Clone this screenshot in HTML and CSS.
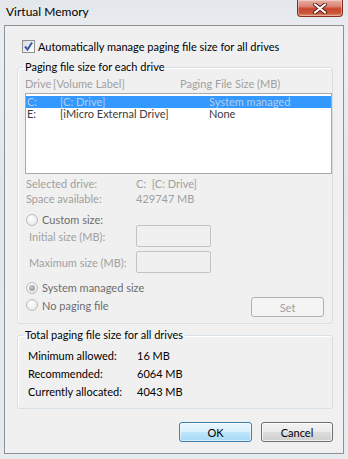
FILE: index.html
```html
<!DOCTYPE html>
<html>
<head>
<meta charset="utf-8">
<title>Virtual Memory</title>
<link rel="stylesheet" href="styles.css">
</head>
<body>
<div class="window">
  <div class="titlebar">
    <span class="title">Virtual Memory</span>
    <div class="close">
      <svg width="16" height="11" viewBox="0 0 16 11">
        <path d="M3 1.5 L13 9.5 M13 1.5 L3 9.5" stroke="#5a1a10" stroke-width="4" stroke-linecap="round"/>
        <path d="M3 1.5 L13 9.5 M13 1.5 L3 9.5" stroke="#ffffff" stroke-width="2.2" stroke-linecap="round"/>
      </svg>
    </div>
  </div>
  <div class="panel">
    <div class="check-row">
      <span class="checkbox">
        <svg width="11" height="11" viewBox="0 0 11 11"><path d="M2 5.5 L4.5 8.5 L9 1.5" fill="none" stroke="#3b5bab" stroke-width="2"/></svg>
      </span>
      <span>Automatically manage paging file size for all drives</span>
    </div>

    <fieldset class="group group-drives">
      <legend>Paging file size for each drive</legend>
      <div class="list-head">
        <span class="hc1">Drive</span><span class="hc2">[Volume Label]</span><span class="hc3">Paging File Size (MB)</span>
      </div>
      <div class="listbox">
        <div class="row selected"><span>C:</span><span>[C: Drive]</span><span>System managed</span></div>
        <div class="row"><span>E:</span><span>[iMicro External Drive]</span><span>None</span></div>
      </div>
      <div class="info info-first"><span class="info-label">Selected drive:</span><span>C:&nbsp; [C: Drive]</span></div>
      <div class="info"><span class="info-label">Space available:</span><span>429747 MB</span></div>

      <div class="radio-row radio-custom"><span class="radio"></span><span class="radio-label">Custom size:</span></div>
      <div class="field-row field-initial"><span class="field-label">Initial size (MB):</span><span class="input"></span></div>
      <div class="field-row field-max"><span class="field-label">Maximum size (MB):</span><span class="input"></span></div>

      <div class="radio-row radio-system"><span class="radio checked"></span><span class="radio-label">System managed size</span></div>
      <div class="last-row">
        <div class="radio-row radio-none"><span class="radio"></span><span class="radio-label">No paging file</span></div>
        <div class="btn btn-disabled">Set</div>
      </div>
    </fieldset>

    <fieldset class="group group-total">
      <legend>Total paging file size for all drives</legend>
      <div class="total-row"><span class="total-label">Minimum allowed:</span><span>16 MB</span></div>
      <div class="total-row"><span class="total-label">Recommended:</span><span>6064 MB</span></div>
      <div class="total-row"><span class="total-label">Currently allocated:</span><span>4043 MB</span></div>
    </fieldset>

    <div class="buttons">
      <div class="btn btn-default">OK</div>
      <div class="btn btn-normal">Cancel</div>
    </div>
  </div>
</div>
</body>
</html>
```

FILE: styles.css
```css
* { box-sizing: border-box; }
html, body { margin: 0; padding: 0; }
body {
  width: 348px;
  height: 459px;
  overflow: hidden;
  font-family: "Lato", "Noto Sans", sans-serif;
  font-size: 11px;
  color: #000;
}
.window {
  width: 348px;
  height: 459px;
  padding: 0 4px 5px 4px;
  background: linear-gradient(180deg, #e3e7eb 0%, #eceff2 10%, #e2e6ea 40%, #e8ebee 100%);
  display: flex;
  flex-direction: column;
}
.titlebar {
  height: 25px;
  display: flex;
  justify-content: space-between;
  align-items: flex-start;
}
.title {
  margin-left: 2px;
  line-height: 24px;
  font-size: 12px;
  color: #000;
}
.close {
  width: 46px;
  height: 17px;
  margin-right: 1px;
  border: 1px solid #8a2d1f;
  border-top: none;
  border-radius: 0 0 4px 4px;
  background: linear-gradient(180deg, #e8b0a4 0%, #d98372 40%, #c7462f 55%, #c9553a 80%, #dc8b68 100%);
  box-shadow: inset 0 0 0 1px rgba(255, 255, 255, 0.35);
  display: flex;
  align-items: center;
  justify-content: center;
}
.panel {
  height: 429px;
  background: #f0f0f0;
  border: 1px solid #8d9196;
  padding: 0 10px 0 12px;
  display: flex;
  flex-direction: column;
}
.check-row {
  margin-top: 14px;
  padding-left: 5px;
  height: 13px;
  line-height: 13px;
  display: flex;
  align-items: center;
  gap: 3px;
}
.checkbox {
  width: 13px;
  height: 13px;
  border: 1px solid #8e8f8f;
  background: linear-gradient(135deg, #dcdcdc, #ffffff);
  display: flex;
  align-items: center;
  justify-content: center;
  flex: none;
}
.group {
  margin: 7px 0 0 0;
  padding: 0 0 6px 7px;
  border: 1px solid #d5dfe5;
  border-radius: 3px;
  min-width: 0;
  box-shadow: inset 1px 1px 0 #fff;
}
.group legend {
  padding: 0 2px;
  margin-left: -2px;
  line-height: 14px;
  color: #000;
}
.list-head {
  margin-top: 3px;
  line-height: 13px;
  color: #a0a0a0;
  display: flex;
}
.hc1 { width: 28px; }
.hc2 { width: 127px; }
.listbox {
  margin-top: 3px;
  height: 81px;
  border: 1px solid #a7a9ab;
  background: #fff;
  padding: 2px 0 0 0;
}
.row {
  height: 12px;
  line-height: 12px;
  padding-left: 1px;
  display: grid;
  grid-template-columns: 33px 149px 1fr;
  color: #3c3c3c;
  overflow: hidden;
}
.row.selected {
  background: #3399ff;
  color: #b3cdea;
}
.info {
  line-height: 15px;
  padding-left: 1px;
  color: #a0a0a0;
  display: flex;
}
.info-first { margin-top: 2px; }
.info-label { width: 110px; }
.radio-row {
  height: 13px;
  line-height: 13px;
  padding-left: 1px;
  display: flex;
  align-items: center;
  gap: 4px;
  color: #6d6d6d;
}
.radio-custom { margin-top: 7px; }
.radio-system { margin-top: 8px; }
.radio {
  width: 12px;
  height: 12px;
  border-radius: 50%;
  border: 1px solid #bcbcbc;
  background: radial-gradient(circle at 40% 35%, #ffffff, #e4e4e4);
  flex: none;
  display: flex;
  align-items: center;
  justify-content: center;
}
.radio.checked::after {
  content: "";
  width: 6px;
  height: 6px;
  border-radius: 50%;
  background: radial-gradient(circle at 40% 35%, #c8c8c8, #8a8a8a);
}
.field-row {
  height: 22px;
  display: flex;
  align-items: center;
  padding-left: 4px;
  color: #a0a0a0;
}
.field-initial { margin-top: -1px; }
.field-max { margin-top: 4px; }
.field-label { width: 107px; }
.input {
  width: 75px;
  height: 22px;
  border: 1px solid #c3c3c3;
  border-radius: 2px;
  background: #f0f0f0;
}
.last-row {
  margin-top: 3px;
  height: 20px;
  display: flex;
  justify-content: space-between;
  align-items: center;
  padding-right: 8px;
}
.radio-none { margin-bottom: 4px; }
.btn {
  height: 20px;
  border-radius: 3px;
  display: flex;
  align-items: center;
  justify-content: center;
}
.btn-disabled {
  width: 73px;
  border: 1px solid #adb2b5;
  background: #f4f4f4;
  color: #a0a0a0;
}
.group-total {
  margin-top: 4px;
  padding-bottom: 7px;
}
.total-row {
  height: 18px;
  line-height: 18px;
  padding-left: 3px;
  display: flex;
}
.total-row:first-of-type { margin-top: 5px; }
.total-label { width: 109px; }
.buttons {
  margin-top: 13px;
  display: flex;
  justify-content: flex-end;
  gap: 9px;
}
.btn-default {
  width: 73px;
  border: 1px solid #3c7fb1;
  background: linear-gradient(180deg, #eaf6fd 0%, #d9f0fc 50%, #bee6fd 51%, #a7d9f5 100%);
  box-shadow: inset 0 0 0 1px rgba(255, 255, 255, 0.6);
}
.btn-normal {
  width: 72px;
  border: 1px solid #707070;
  background: linear-gradient(180deg, #f2f2f2 0%, #ebebeb 50%, #dddddd 51%, #cfcfcf 100%);
  box-shadow: inset 0 0 0 1px rgba(255, 255, 255, 0.7);
}
```
